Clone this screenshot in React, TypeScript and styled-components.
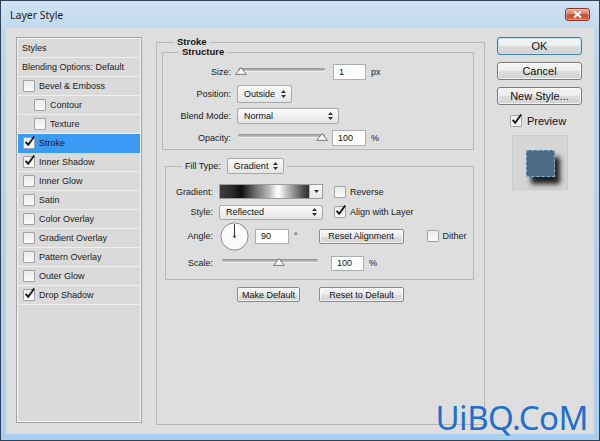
import React from "react";
import styled, { createGlobalStyle } from "styled-components";

const UI_FONT = `"Liberation Sans", Arial, sans-serif`;

const GlobalStyle = createGlobalStyle`
  html, body {
    margin: 0;
    padding: 0;
    background: #ffffff;
  }
  body {
    font-family: ${UI_FONT};
  }
`;

type Effect = {
  label: string;
  checked?: boolean;
  indent?: boolean;
  selected?: boolean;
};

const effects: Effect[] = [
  { label: "Bevel & Emboss" },
  { label: "Contour", indent: true },
  { label: "Texture", indent: true },
  { label: "Stroke", checked: true, selected: true },
  { label: "Inner Shadow", checked: true },
  { label: "Inner Glow" },
  { label: "Satin" },
  { label: "Color Overlay" },
  { label: "Gradient Overlay" },
  { label: "Pattern Overlay" },
  { label: "Outer Glow" },
  { label: "Drop Shadow", checked: true },
];

function CheckBox({ checked }: { checked?: boolean }) {
  return (
    <Box>
      {checked && (
        <CheckMark width="13" height="13" viewBox="0 0 13 13">
          <path d="M2.6 6.8 L5.2 9.8 L11.2 1.4" fill="none" stroke="#111" strokeWidth="1.8" />
        </CheckMark>
      )}
    </Box>
  );
}

function UpDown() {
  return (
    <svg width="5" height="8" viewBox="0 0 5 8">
      <path d="M2.5 0 L5 3 H0 Z M0 5 H5 L2.5 8 Z" fill="#333" />
    </svg>
  );
}

function Slider({ width, value }: { width: number; value: number }) {
  // value 0..1, thumb keeps 3px inside each end of the groove
  const left = 3 + value * (width - 6);
  return (
    <SliderWrap $w={width}>
      <Groove />
      <Thumb width="12" height="8" viewBox="0 0 12 8" style={{ left }}>
        <path d="M6 0.6 L11.4 7.4 H0.6 Z" fill="#f6f6f6" stroke="#777" strokeWidth="1" />
      </Thumb>
    </SliderWrap>
  );
}

function AngleDial() {
  return (
    <Dial width="29" height="29" viewBox="0 0 29 29">
      <circle cx="14.5" cy="14.5" r="13.6" fill="#fbfbfb" stroke="#8c8c8c" />
      <line x1="14.5" y1="14.5" x2="14.5" y2="2" stroke="#333" strokeWidth="1" />
      <circle cx="14.5" cy="14.5" r="1.2" fill="#333" />
    </Dial>
  );
}

export default function App() {
  return (
    <>
      <GlobalStyle />
      <Window>
        <TitleBar>
          <Title>Layer Style</Title>
          <CloseButton aria-label="Close">
            <svg width="9" height="7" viewBox="0 0 9 7">
              <path d="M1 0.5 L8 6.5 M8 0.5 L1 6.5" stroke="#fff" strokeWidth="2" />
            </svg>
          </CloseButton>
        </TitleBar>

        <Client>
          <StyleList>
            <HeaderRow>Styles</HeaderRow>
            <HeaderRow>Blending Options: Default</HeaderRow>
            {effects.map((e) => (
              <EffectRow key={e.label} $indent={!!e.indent} $selected={!!e.selected}>
                <CheckBox checked={e.checked} />
                <span>{e.label}</span>
              </EffectRow>
            ))}
          </StyleList>

          <StrokeGroup>
            <GroupLegend $offset={17}>Stroke</GroupLegend>

            <SubGroup $ml={5} $mt={0}>
              <GroupLegend $offset={16}>Structure</GroupLegend>
              <Rows $pt={4} $pb={0}>
                <FieldRow $h={22}>
                  <FieldLabel $w={68}>Size:</FieldLabel>
                  <Slider width={87} value={0} />
                  <NumberBox $w={33} $h={16} $ml={8}>1</NumberBox>
                  <Unit>px</Unit>
                </FieldRow>
                <FieldRow $h={22}>
                  <FieldLabel $w={68}>Position:</FieldLabel>
                  <Select $w={55} $h={18}>
                    <span>Outside</span>
                    <UpDown />
                  </Select>
                </FieldRow>
                <FieldRow $h={22}>
                  <FieldLabel $w={68}>Blend Mode:</FieldLabel>
                  <Select $w={102} $h={16}>
                    <span>Normal</span>
                    <UpDown />
                  </Select>
                </FieldRow>
                <FieldRow $h={22}>
                  <FieldLabel $w={68}>Opacity:</FieldLabel>
                  <Slider width={87} value={1} />
                  <NumberBox $w={34} $h={16} $ml={7}>100</NumberBox>
                  <Unit>%</Unit>
                </FieldRow>
              </Rows>
            </SubGroup>

            <SubGroup $ml={8} $mt={8}>
              <GroupLegend $offset={16}>
                <LegendInner>
                  <span>Fill Type:</span>
                  <Select $w={57} $h={16}>
                    <span>Gradient</span>
                    <UpDown />
                  </Select>
                </LegendInner>
              </GroupLegend>
              <Rows $pt={7} $pb={3}>
                <FieldRow $h={21}>
                  <FieldLabel $w={47}>Gradient:</FieldLabel>
                  <GradientPicker>
                    <Swatch />
                    <SwatchArrow>
                      <svg width="5" height="3" viewBox="0 0 5 3">
                        <path d="M0 0 H5 L2.5 3 Z" fill="#333" />
                      </svg>
                    </SwatchArrow>
                  </GradientPicker>
                  <OptionCheck $ml={11}>
                    <CheckBox />
                    <span>Reverse</span>
                  </OptionCheck>
                </FieldRow>
                <FieldRow $h={20}>
                  <FieldLabel $w={47}>Style:</FieldLabel>
                  <Select $w={104} $h={15}>
                    <span>Reflected</span>
                    <UpDown />
                  </Select>
                  <OptionCheck $ml={11}>
                    <CheckBox checked />
                    <span>Align with Layer</span>
                  </OptionCheck>
                </FieldRow>
                <FieldRow $h={28}>
                  <FieldLabel $w={47}>Angle:</FieldLabel>
                  <AngleDial />
                  <NumberBox $w={34} $h={15} $ml={6}>90</NumberBox>
                  <Unit>°</Unit>
                  <SmallButton $w={85} $ml={21}>Reset Alignment</SmallButton>
                  <OptionCheck $ml={23}>
                    <CheckBox />
                    <span>Dither</span>
                  </OptionCheck>
                </FieldRow>
                <FieldRow $h={26}>
                  <FieldLabel $w={47}>Scale:</FieldLabel>
                  <SliderSpacer>
                    <Slider width={96} value={0.6} />
                  </SliderSpacer>
                  <NumberBox $w={33} $h={15} $ml={13}>100</NumberBox>
                  <Unit>%</Unit>
                </FieldRow>
              </Rows>
            </SubGroup>

            <DefaultsRow>
              <SmallButton $w={63}>Make Default</SmallButton>
              <SmallButton $w={85}>Reset to Default</SmallButton>
            </DefaultsRow>
          </StrokeGroup>

          <SideColumn>
            <DialogButton $primary>OK</DialogButton>
            <DialogButton>Cancel</DialogButton>
            <DialogButton>New Style...</DialogButton>
            <PreviewToggle>
              <CheckBox checked />
              <span>Preview</span>
            </PreviewToggle>
            <PreviewThumb>
              <PreviewSquare />
            </PreviewThumb>
          </SideColumn>
        </Client>

        <Watermark>UiBQ.CoM</Watermark>
      </Window>
    </>
  );
}

const Window = styled.div`
  position: relative;
  width: 600px;
  height: 441px;
  box-sizing: border-box;
  border: 1px solid #2f4256;
  background: linear-gradient(180deg, #d0e3f5 0%, #bed6ee 8%, #b4d0ec 60%, #a9d0f1 100%);
  padding: 0 5px 6px;
  display: flex;
  flex-direction: column;
  overflow: hidden;
`;

const TitleBar = styled.div`
  height: 27px;
  flex-shrink: 0;
  display: flex;
  align-items: center;
  justify-content: space-between;
  padding: 0 4px;
`;

const Title = styled.span`
  font-family: "Noto Sans", "Liberation Sans", sans-serif;
  font-size: 10.5px;
  color: #1b1b1b;
`;

const CloseButton = styled.div`
  width: 25px;
  height: 13px;
  box-sizing: border-box;
  display: flex;
  align-items: center;
  justify-content: center;
  border: 1px solid #8d3426;
  border-radius: 3px;
  background: linear-gradient(180deg, #eab1a4 0%, #d87a64 45%, #c44a2f 55%, #d46a4c 100%);
  box-shadow: inset 0 0 0 1px rgba(255, 255, 255, 0.35);
`;

const Client = styled.div`
  flex: 1;
  display: flex;
  align-items: stretch;
  background: #dedede;
  padding: 9px 12px 9px 10px;
  min-height: 0;
`;

const StyleList = styled.div`
  width: 126px;
  flex-shrink: 0;
  box-sizing: border-box;
  border: 1px solid #a4a4a4;
  box-shadow: inset 1px 1px 0 #f3f3f3, inset -1px -1px 0 #f3f3f3;
  background: #dadada;
  padding: 1px;
  margin-bottom: 2px;
`;

const HeaderRow = styled.div`
  height: 18px;
  border-bottom: 1px solid #efefef;
  display: flex;
  align-items: center;
  padding-left: 4px;
  font-size: 9px;
  color: #1a1a1a;
`;

const EffectRow = styled.div<{ $indent: boolean; $selected: boolean }>`
  height: 18px;
  border-bottom: 1px solid ${(p) => (p.$selected ? "#3b9bf4" : "#efefef")};
  display: flex;
  align-items: center;
  gap: 4px;
  padding-left: ${(p) => (p.$indent ? 16 : 5)}px;
  font-size: 9px;
  color: #1a1a1a;
  background: ${(p) => (p.$selected ? "#3b9bf4" : "transparent")};
`;

const Box = styled.span`
  position: relative;
  width: 12px;
  height: 12px;
  flex-shrink: 0;
  box-sizing: border-box;
  border: 1px solid #a2a2a2;
  border-radius: 1px;
  background: linear-gradient(180deg, #ececec, #fafafa);
`;

const CheckMark = styled.svg`
  position: absolute;
  left: -1px;
  top: -3px;
`;

const StrokeGroup = styled.fieldset`
  width: 329px;
  flex-shrink: 0;
  box-sizing: border-box;
  margin: 0 12px 0 14px;
  padding: 0;
  min-width: 0;
  border: 1px solid #b7b7b7;
  display: flex;
  flex-direction: column;
`;

const SubGroup = styled.fieldset<{ $ml: number; $mt: number }>`
  margin: ${(p) => p.$mt}px 10px 0 ${(p) => p.$ml}px;
  padding: 0;
  min-width: 0;
  border: 1px solid #b7b7b7;
`;

const GroupLegend = styled.legend<{ $offset: number }>`
  margin-left: ${(p) => p.$offset}px;
  padding: 0 3px;
  font-family: ${UI_FONT};
  font-size: 9.5px;
  font-weight: bold;
  line-height: 10px;
  color: #151515;
`;

const LegendInner = styled.span`
  display: inline-flex;
  align-items: center;
  gap: 6px;
  font-weight: normal;
  font-size: 9px;
`;

const Rows = styled.div<{ $pt: number; $pb: number }>`
  display: flex;
  flex-direction: column;
  padding: ${(p) => p.$pt}px 0 ${(p) => p.$pb}px;
`;

const FieldRow = styled.div<{ $h: number }>`
  height: ${(p) => p.$h}px;
  display: flex;
  align-items: center;
  font-size: 9px;
  color: #1a1a1a;
`;

const FieldLabel = styled.span<{ $w: number }>`
  width: ${(p) => p.$w}px;
  flex-shrink: 0;
  text-align: right;
  margin-right: 6px;
`;

const SliderWrap = styled.div<{ $w: number }>`
  position: relative;
  width: ${(p) => p.$w}px;
  height: 10px;
  margin-left: 1px;
  flex-shrink: 0;
`;

const SliderSpacer = styled.div`
  margin-left: 2px;
  display: flex;
`;

const Groove = styled.div`
  margin-top: 1px;
  height: 3px;
  border-radius: 2px;
  background: linear-gradient(180deg, #8e8e8e, #c6c6c6);
  box-shadow: 0 1px 0 #f1f1f1;
`;

const Thumb = styled.svg`
  position: absolute;
  top: 0;
  margin-left: -6px;
`;

const NumberBox = styled.div<{ $w: number; $h: number; $ml: number }>`
  width: ${(p) => p.$w}px;
  height: ${(p) => p.$h}px;
  margin-left: ${(p) => p.$ml}px;
  box-sizing: border-box;
  border: 1px solid #a9aeb5;
  background: #ffffff;
  display: flex;
  align-items: center;
  padding-left: 5px;
  font-size: 9px;
  color: #111;
`;

const Unit = styled.span`
  margin-left: 5px;
`;

const Select = styled.div<{ $w: number; $h: number }>`
  width: ${(p) => p.$w}px;
  height: ${(p) => p.$h}px;
  box-sizing: border-box;
  display: flex;
  align-items: center;
  justify-content: space-between;
  padding: 0 5px 0 6px;
  border: 1px solid #a8a8a8;
  border-radius: 2px;
  background: linear-gradient(180deg, #fbfbfb 0%, #f0f0f0 50%, #e4e4e4 100%);
  font-size: 9px;
  color: #111;
`;

const GradientPicker = styled.div`
  width: 104px;
  height: 15px;
  display: flex;
  box-sizing: border-box;
  border: 1px solid #9c9c9c;
  background: #fff;
`;

const Swatch = styled.div`
  flex: 1;
  background: linear-gradient(
    90deg,
    #3e3e3e 0%,
    #2b2b2b 14%,
    #0e0e0e 24%,
    #404040 32%,
    #7a7a7a 42%,
    #b8b8b8 55%,
    #f4f4f4 63%,
    #ffffff 66%,
    #c6c6c6 74%,
    #8a8a8a 84%,
    #4a4a4a 94%,
    #2e2e2e 100%
  );
`;

const SwatchArrow = styled.div`
  width: 12px;
  display: flex;
  align-items: center;
  justify-content: center;
  border-left: 1px solid #b4b4b4;
  background: linear-gradient(180deg, #fbfbfb, #e7e7e7);
`;

const OptionCheck = styled.label<{ $ml: number }>`
  display: flex;
  align-items: center;
  gap: 4px;
  margin-left: ${(p) => p.$ml}px;
`;

const Dial = styled.svg`
  margin-left: 1px;
  flex-shrink: 0;
`;

const SmallButton = styled.div<{ $w: number; $ml?: number }>`
  width: ${(p) => p.$w}px;
  height: 15px;
  margin-left: ${(p) => p.$ml ?? 0}px;
  box-sizing: border-box;
  display: flex;
  align-items: center;
  justify-content: center;
  border: 1px solid #8a8a8a;
  border-radius: 2px;
  background: linear-gradient(180deg, #f6f6f6 0%, #ececec 50%, #dedede 51%, #d3d3d3 100%);
  box-shadow: inset 0 0 0 1px rgba(255, 255, 255, 0.7);
  font-size: 9px;
  color: #111;
`;

const DefaultsRow = styled.div`
  display: flex;
  justify-content: center;
  gap: 19px;
  margin-top: 7px;
`;

const SideColumn = styled.div`
  width: 85px;
  flex-shrink: 0;
  display: flex;
  flex-direction: column;
  gap: 7px;
`;

const DialogButton = styled.div<{ $primary?: boolean }>`
  height: 18px;
  box-sizing: border-box;
  display: flex;
  align-items: center;
  justify-content: center;
  border: 1px solid ${(p) => (p.$primary ? "#3c7fb1" : "#7a7a7a")};
  border-radius: 3px;
  background: linear-gradient(180deg, #f5f5f5 0%, #ededed 50%, #dddddd 51%, #d1d1d1 100%);
  box-shadow: inset 0 0 0 1px ${(p) => (p.$primary ? "#bfe3f7" : "rgba(255,255,255,0.75)")};
  font-size: 11px;
  color: #111;
`;

const PreviewToggle = styled.label`
  display: flex;
  align-items: center;
  gap: 5px;
  height: 12px;
  margin: 3px 0 0 13px;
  font-size: 11px;
  color: #111;
`;

const PreviewThumb = styled.div`
  width: 56px;
  height: 55px;
  box-sizing: border-box;
  margin: 1px 0 0 15px;
  padding: 14px 0 0 13px;
  border: 1px solid #cacaca;
  background: #d5d5d5;
`;

const PreviewSquare = styled.div`
  width: 29px;
  height: 27px;
  box-sizing: border-box;
  border: 1px dashed #8fb0c8;
  background: #4a6a85;
  box-shadow: 5px 7px 5px rgba(0, 0, 0, 0.85);
`;

const Watermark = styled.div`
  position: absolute;
  right: 11px;
  bottom: 6px;
  font-family: "Noto Sans", "Open Sans", sans-serif;
  font-size: 33px;
  line-height: 33px;
  letter-spacing: -0.5px;
  color: #1c6fd3;
`;
